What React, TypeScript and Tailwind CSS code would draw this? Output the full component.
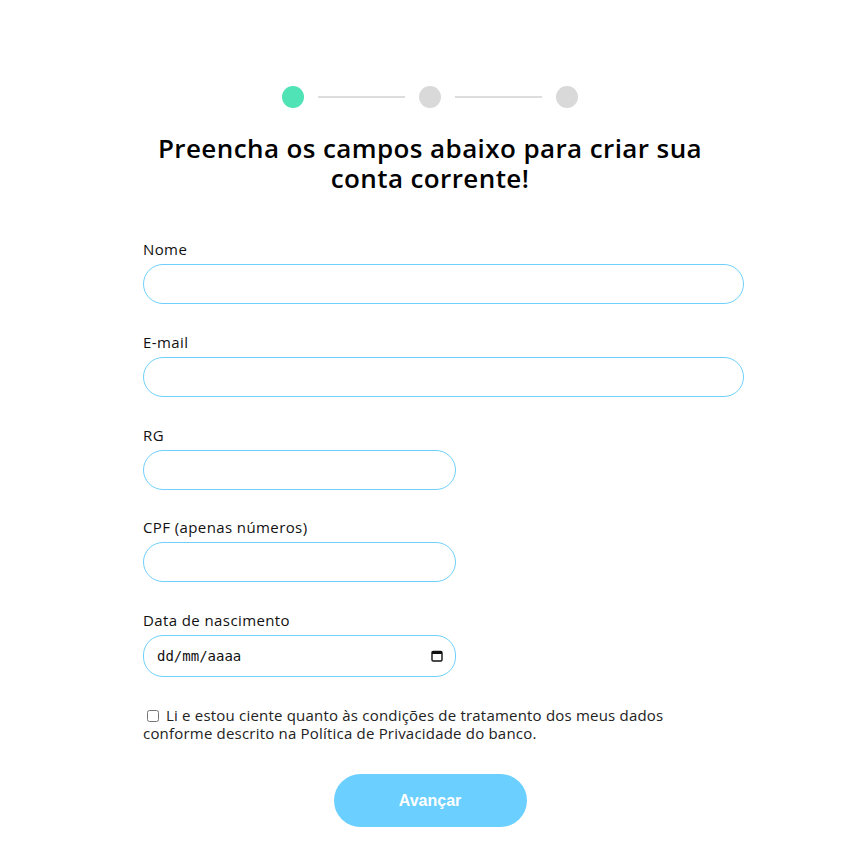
import React from "react";

function Field({ label, wide = true }: { label: string; wide?: boolean }) {
  return (
    <div className="flex flex-col">
      <label className="text-[15px] leading-[18px] tracking-[0.4px] text-[#111]">{label}</label>
      <input
        type="text"
        className={`mt-[6px] h-[40px] rounded-[20px] border border-[#6fd0fb] bg-white px-3 outline-none ${wide ? "w-full" : "w-[313px]"}`}
      />
    </div>
  );
}

export default function App() {
  return (
    <div className="min-h-[856px] w-full bg-white" style={{ fontFamily: "'Open Sans', sans-serif" }}>
      <div className="flex flex-col items-center pl-[9px] pt-[86px]">
        <div className="flex items-center">
          <div className="h-[22px] w-[22px] rounded-full bg-[#4fe3b5]" />
          <div className="mx-[14px] h-[2px] w-[87px] bg-[#dddddd]" />
          <div className="h-[22px] w-[22px] rounded-full bg-[#d9d9d9]" />
          <div className="mx-[14px] h-[2px] w-[87px] bg-[#dddddd]" />
          <div className="h-[22px] w-[22px] rounded-full bg-[#d9d9d9]" />
        </div>
        <h1 className="mt-[25px] w-[580px] text-center text-[26px] font-semibold leading-[30px] tracking-[0.4px] text-black">
          Preencha os campos abaixo para criar sua conta corrente!
        </h1>
        <div className="ml-[27px] mt-[47px] flex w-[601px] flex-col gap-[29px]">
          <Field label="Nome" />
          <Field label="E-mail" />
          <Field label="RG" wide={false} />
          <div className="-mt-[1px]">
            <Field label="CPF (apenas números)" wide={false} />
          </div>
          <div className="flex flex-col">
            <label className="text-[15px] leading-[18px] tracking-[0.4px] text-[#111]">Data de nascimento</label>
            <div className="relative mt-[6px] h-[42px] w-[313px]">
              <input
                type="text"
                placeholder="dd/mm/aaaa"
                className="h-full w-full rounded-[20px] border border-[#6fd0fb] bg-white pl-[13px] pr-3 text-[14px] text-[#111] outline-none placeholder:text-[#111]"
                style={{ fontFamily: "'DejaVu Sans Mono', monospace" }}
              />
              <svg
                className="pointer-events-none absolute right-[13px] top-[15px]"
                width="12"
                height="12"
                viewBox="0 0 12 12"
                fill="none"
              >
                <rect x="1" y="1.5" width="10" height="9.5" rx="1.2" stroke="#111" strokeWidth="1.4" />
                <rect x="1" y="1.5" width="10" height="2.5" fill="#111" />
              </svg>
            </div>
          </div>
          <div className="text-[15px] leading-[18px] tracking-[0.2px] text-[#222]">
            <label>
              <input type="checkbox" className="ml-[4px] mr-[7px] h-[12px] w-[12px] align-[-1px]" />
              Li e estou ciente quanto às condições de tratamento dos meus dados
              <br />
              conforme descrito na Política de Privacidade do banco.
            </label>
          </div>
        </div>
        <button
          className="mt-[32px] h-[53px] w-[193px] rounded-full bg-[#6bcfff] text-[16px] font-bold text-white"
          style={{ fontFamily: "'Liberation Sans', Arial, sans-serif" }}
        >
          Avançar
        </button>
      </div>
    </div>
  );
}
